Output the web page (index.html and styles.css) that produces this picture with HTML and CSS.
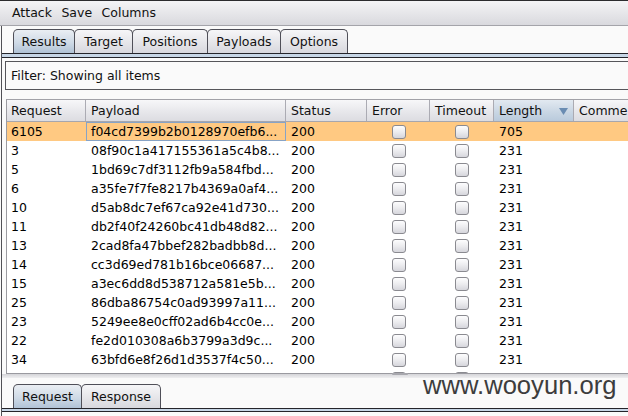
FILE: index.html
```html
<!DOCTYPE html>
<html>
<head>
<meta charset="utf-8">
<link rel="stylesheet" href="styles.css">
</head>
<body>
<div class="app">
  <div class="menubar"><span>Attack</span><span>Save</span><span>Columns</span></div>
  <div class="main">
    <div class="tabs">
      <div class="tab active w-results">Results</div>
      <div class="tab w-target">Target</div>
      <div class="tab w-positions">Positions</div>
      <div class="tab w-payloads">Payloads</div>
      <div class="tab w-options">Options</div>
    </div>
    <div class="tabline"></div>
    <div class="filter">Filter: Showing all items</div>
    <div class="table">
      <div class="row head">
        <div class="c">Request</div>
        <div class="c">Payload</div>
        <div class="c">Status</div>
        <div class="c">Error</div>
        <div class="c">Timeout</div>
        <div class="c sorted">Length<svg class="arrow" width="9" height="7" viewBox="0 0 9 7"><path d="M0 0H9L4.5 7Z" fill="#6a8cb2"/></svg></div>
        <div class="c">Comment</div>
      </div>
      <div class="body">
        <div class="row sel"><div class="c">6105</div><div class="c focus">f04cd7399b2b0128970efb6...</div><div class="c">200</div><div class="c cb"><i></i></div><div class="c cb"><i></i></div><div class="c">705</div><div class="c"></div></div>
        <div class="row"><div class="c">3</div><div class="c">08f90c1a417155361a5c4b8...</div><div class="c">200</div><div class="c cb"><i></i></div><div class="c cb"><i></i></div><div class="c">231</div><div class="c"></div></div>
        <div class="row"><div class="c">5</div><div class="c">1bd69c7df3112fb9a584fbd...</div><div class="c">200</div><div class="c cb"><i></i></div><div class="c cb"><i></i></div><div class="c">231</div><div class="c"></div></div>
        <div class="row"><div class="c">6</div><div class="c">a35fe7f7fe8217b4369a0af4...</div><div class="c">200</div><div class="c cb"><i></i></div><div class="c cb"><i></i></div><div class="c">231</div><div class="c"></div></div>
        <div class="row"><div class="c">10</div><div class="c">d5ab8dc7ef67ca92e41d730...</div><div class="c">200</div><div class="c cb"><i></i></div><div class="c cb"><i></i></div><div class="c">231</div><div class="c"></div></div>
        <div class="row"><div class="c">11</div><div class="c">db2f40f24260bc41db48d82...</div><div class="c">200</div><div class="c cb"><i></i></div><div class="c cb"><i></i></div><div class="c">231</div><div class="c"></div></div>
        <div class="row"><div class="c">13</div><div class="c">2cad8fa47bbef282badbb8d...</div><div class="c">200</div><div class="c cb"><i></i></div><div class="c cb"><i></i></div><div class="c">231</div><div class="c"></div></div>
        <div class="row"><div class="c">14</div><div class="c">cc3d69ed781b16bce06687...</div><div class="c">200</div><div class="c cb"><i></i></div><div class="c cb"><i></i></div><div class="c">231</div><div class="c"></div></div>
        <div class="row"><div class="c">15</div><div class="c">a3ec6dd8d538712a581e5b...</div><div class="c">200</div><div class="c cb"><i></i></div><div class="c cb"><i></i></div><div class="c">231</div><div class="c"></div></div>
        <div class="row"><div class="c">25</div><div class="c">86dba86754c0ad93997a11...</div><div class="c">200</div><div class="c cb"><i></i></div><div class="c cb"><i></i></div><div class="c">231</div><div class="c"></div></div>
        <div class="row"><div class="c">23</div><div class="c">5249ee8e0cff02ad6b4cc0e...</div><div class="c">200</div><div class="c cb"><i></i></div><div class="c cb"><i></i></div><div class="c">231</div><div class="c"></div></div>
        <div class="row"><div class="c">22</div><div class="c">fe2d010308a6b3799a3d9c...</div><div class="c">200</div><div class="c cb"><i></i></div><div class="c cb"><i></i></div><div class="c">231</div><div class="c"></div></div>
        <div class="row"><div class="c">34</div><div class="c">63bfd6e8f26d1d3537f4c50...</div><div class="c">200</div><div class="c cb"><i></i></div><div class="c cb"><i></i></div><div class="c">231</div><div class="c"></div></div>
        <div class="row"><div class="c"></div><div class="c"></div><div class="c"></div><div class="c cb"><i></i></div><div class="c cb"><i></i></div><div class="c"></div><div class="c"></div></div>
      </div>
    </div>
    <div class="splitter"><span class="grip"></span></div>
    <div class="tabs lower">
      <div class="tab active w-request">Request</div>
      <div class="tab w-response">Response</div>
    </div>
    <div class="tabline thin"></div>
  </div>
  <div class="watermark">www.wooyun.org</div>
</div>
</body>
</html>
```

FILE: styles.css
```css
html, body {
  margin: 0;
  padding: 0;
}
body {
  width: 628px;
  height: 416px;
  overflow: hidden;
  background: #fafafa;
  font-family: "DejaVu Sans", sans-serif;
  font-size: 12.5px;
  color: #111;
}
.app {
  position: relative;
  width: 628px;
  height: 416px;
  overflow: hidden;
}
.menubar {
  height: 24px;
  line-height: 24px;
  border-top: 1px solid #2b2b2e;
  border-bottom: 1px solid #a4a4aa;
  background: linear-gradient(#f4f4f6, #e9e9ec 40%, #d9d9de);
  padding-left: 12px;
  display: flex;
  gap: 9.5px;
}
.main {
  margin-left: 1px;
  border-left: 1px solid #505055;
  background: #fafafa;
  height: 390px;
  overflow: hidden;
}
.tabs {
  display: flex;
  padding: 3px 0 0 11px;
}
.tab {
  box-sizing: border-box;
  height: 24px;
  line-height: 23px;
  text-align: center;
  border: 1px solid #4f4f58;
  border-bottom: none;
  border-radius: 5px 5px 0 0;
  background: linear-gradient(#f6f6f8, #e4e4e8 60%, #d8d8de);
  margin-right: -1px;
  color: #111;
  white-space: nowrap;
}
.w-results { width: 62px; }
.w-target { width: 59px; }
.w-positions { width: 76px; }
.w-payloads { width: 74px; }
.w-options { width: 68px; }
.w-request { width: 69px; }
.w-response { width: 80px; }
.tab.active {
  background: linear-gradient(#eaeef3, #cfdae6 55%, #b1c3d6);
  position: relative;
  z-index: 1;
}
.tabline {
  height: 3px;
  background: #c7d6e6;
  border-top: 1px solid #24242a;
  border-bottom: 1px solid #24242a;
}
.tabline.thin {
  height: 2px;
}
.filter {
  margin: 3px 0 0 3px;
  height: 27px;
  line-height: 27px;
  border: 1px solid #55555a;
  border-right: none;
  background: #fafafa;
  padding-left: 5px;
}
.table {
  margin: 9px 0 0 4px;
  border-top: 1px solid #a2a2a8;
  border-left: 1px solid #9a9aa0;
  border-bottom: 1px solid #9a9aa0;
  background: #fff;
}
.row {
  display: grid;
  grid-template-columns: 79px 200px 81px 63px 64px 80px 140px;
  height: 19px;
  line-height: 19px;
  white-space: nowrap;
}
.row .c {
  padding-left: 5px;
  overflow: hidden;
  color: #000;
}
.row .c:first-child {
  padding-left: 4px;
}
.row.head {
  height: 21px;
  line-height: 21px;
  background: linear-gradient(#f7f7f9, #e6e6ea 60%, #dcdce1);
  border-bottom: 1px solid #a6a6ad;
}
.row.head .c {
  border-right: 1px solid #ababb3;
  color: #111;
}
.row.head .c.sorted {
  position: relative;
  background: linear-gradient(#e2e9f1, #cad7e4 55%, #b9cadc);
}
.arrow {
  position: absolute;
  right: 5px;
  top: 8px;
}
.body {
  height: 251px;
  overflow: hidden;
  background: #fff;
}
.row.sel {
  background: #ffc982;
}
.row .c.focus {
  box-shadow: inset 0 0 0 1px #87a3c6;
}
.row .c.cb {
  padding: 0;
  display: flex;
  justify-content: center;
  align-items: flex-start;
}
.cb i {
  display: block;
  width: 12px;
  height: 12px;
  margin-top: 3px;
  border: 1px solid #8a8a90;
  border-radius: 3px;
  background: linear-gradient(#fdfdfe, #ececef 50%, #d6d6dc);
}
.splitter {
  position: relative;
  height: 4px;
  background: linear-gradient(#d4d4d8, #eeeef0);
}
.grip {
  position: absolute;
  left: 390px;
  top: -1px;
  width: 16px;
  height: 2px;
  background: #a8a8ae;
  border-radius: 1px;
}
.tabs.lower {
  padding-top: 6px;
}
.watermark {
  position: absolute;
  left: 423px;
  top: 372px;
  font-family: "Liberation Sans", Arial, sans-serif;
  font-size: 25.6px;
  line-height: 26px;
  color: #3d3d3d;
}
```
